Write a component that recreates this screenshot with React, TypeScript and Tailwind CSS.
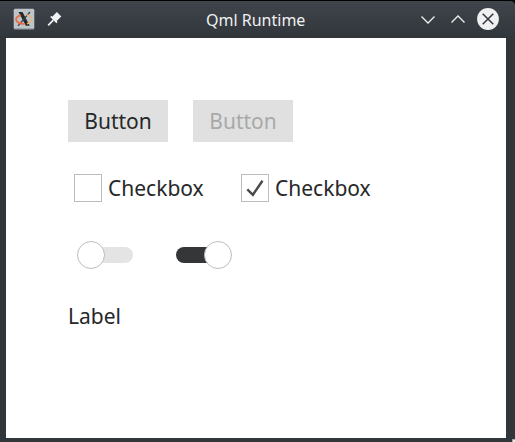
import React from "react";

function TitleBar() {
  return (
    <header className="relative flex h-[38px] shrink-0 items-center justify-between rounded-tr-[5px] border-t border-black bg-linear-to-b from-[#3f454b] to-[#31363b] pr-[16px] pl-[13px]">
      <div className="flex items-center gap-[12px]">
        <svg width="22" height="22" viewBox="0 0 22 22" className="-mt-[2px] block">
          <rect x="0.7" y="0.7" width="20.600" height="20.600" rx="1.5" fill="#bdc5c9" />
          <path d="M1 20.8h20" stroke="#909a9f" />
          <path d="M5.500 4h4l7.300 13.800h-4z" fill="#25292c" />
          <path d="M17 4 5 17.800" stroke="#3a3f42" strokeWidth="1.200" />
          <path d="M8 7.300C4.800 8 2.900 9.600 3.100 11.700c.4 2.800 4.400 4.500 8.400 4" fill="none" stroke="#ef6a3c" strokeWidth="1.800" />
          <path d="M13.500 7c4 .3 5.900 2 5.400 4.700-.5 2.300-2.500 3.600-5 4" fill="none" stroke="#e9b682" strokeWidth="1.500" />
        </svg>
        <svg width="16" height="16" viewBox="0 0 16 16" className="-mt-[1px] block">
          <path d="M9.900.9 14.300 5.400 9.700 10l.9 1.100-1.200 1.200L3.200 6.100l1.200-1.200 1.100.7z" fill="#f1f3f4" />
          <path d="M6.300 9.200 1.200 14.300" stroke="#f1f3f4" strokeWidth="1.700" />
        </svg>
      </div>
      <h1 className="absolute top-[7px] left-[206px] text-[16px] leading-[24px] whitespace-nowrap text-[#eff0f1]">Qml Runtime</h1>
      <div className="flex items-center">
        <svg width="14" height="12" viewBox="0 0 14 12" className="mr-[16px] block">
          <path d="m.5 2.500 6.500 6.500 6.500-6.500" fill="none" stroke="#eff0f1" strokeWidth="1.300" />
        </svg>
        <svg width="14" height="12" viewBox="0 0 14 12" className="mr-[12px] block">
          <path d="M.5 8.500 7 2 13.500 8.500" fill="none" stroke="#eff0f1" strokeWidth="1.300" />
        </svg>
        <svg width="22" height="22" viewBox="0 0 22 22" className="-mt-[2px] block">
          <circle cx="11" cy="11" r="10.900" fill="#eff0f1" />
          <path d="m5.700 5.700 10.600 10.600m0-10.600L5.700 16.300" stroke="#31363b" strokeWidth="1.500" />
        </svg>
      </div>
    </header>
  );
}

function Checkbox({ checked = false }: { checked?: boolean }) {
  return (
    <label className="flex items-center gap-[6px]">
      <span className="flex size-[28px] items-center justify-center border border-[#bdbdbd] bg-white">
        {checked && (
          <svg width="26" height="26" viewBox="0 0 26 26" className="block">
            <path d="m5.300 14.300 5.600 5.500L20.500 5.700" fill="none" stroke="#4a4a4b" strokeWidth="2.400" />
          </svg>
        )}
      </span>
      <span className="leading-[28px]">Checkbox</span>
    </label>
  );
}

function Switch({ on = false }: { on?: boolean }) {
  return (
    <div className="grid h-[28px] w-[56px] items-center">
      <div
        className={
          on
            ? "col-start-1 row-start-1 mr-[8px] h-[16px] rounded-l-full bg-[#353637]"
            : "col-start-1 row-start-1 ml-[8px] h-[16px] rounded-r-full bg-[#e4e4e4]"
        }
      />
      <span
        className={
          on
            ? "col-start-1 row-start-1 size-[28px] justify-self-end rounded-full border border-[#bdbdbd] bg-white"
            : "col-start-1 row-start-1 size-[28px] justify-self-start rounded-full border border-[#bdbdbd] bg-white"
        }
      />
    </div>
  );
}

export default function App() {
  return (
    <div className="h-[442px] w-[515px] bg-black font-['Noto_Sans',sans-serif]">
      <div className="relative flex h-full w-full flex-col rounded-tr-[5px] bg-[#31363b]">
        <TitleBar />
        <main className="ml-[6px] flex h-[400px] w-[500px] flex-col items-start bg-white pt-[62px] pl-[62px] text-[21px] text-[#26282a]">
          <div className="flex gap-[25px]">
            <button className="h-[42px] w-[100px] bg-[#e0e0e0] leading-[42px]">Button</button>
            <button disabled className="h-[42px] w-[100px] bg-[#e0e0e0] leading-[42px] text-[#a8a9a9]">Button</button>
          </div>
          <div className="mt-[32px] ml-[6px] flex">
            <div className="w-[167px]"><Checkbox /></div>
            <Checkbox checked />
          </div>
          <div className="mt-[39px] ml-[9px] flex gap-[43px]">
            <Switch />
            <Switch on />
          </div>
          <p className="mt-[33px] leading-[29px]">Label</p>
        </main>
        <span className="absolute right-0 bottom-0 size-[3px] border-t border-l border-[#aaa] bg-[#e8e8e8]" />
      </div>
    </div>
  );
}
